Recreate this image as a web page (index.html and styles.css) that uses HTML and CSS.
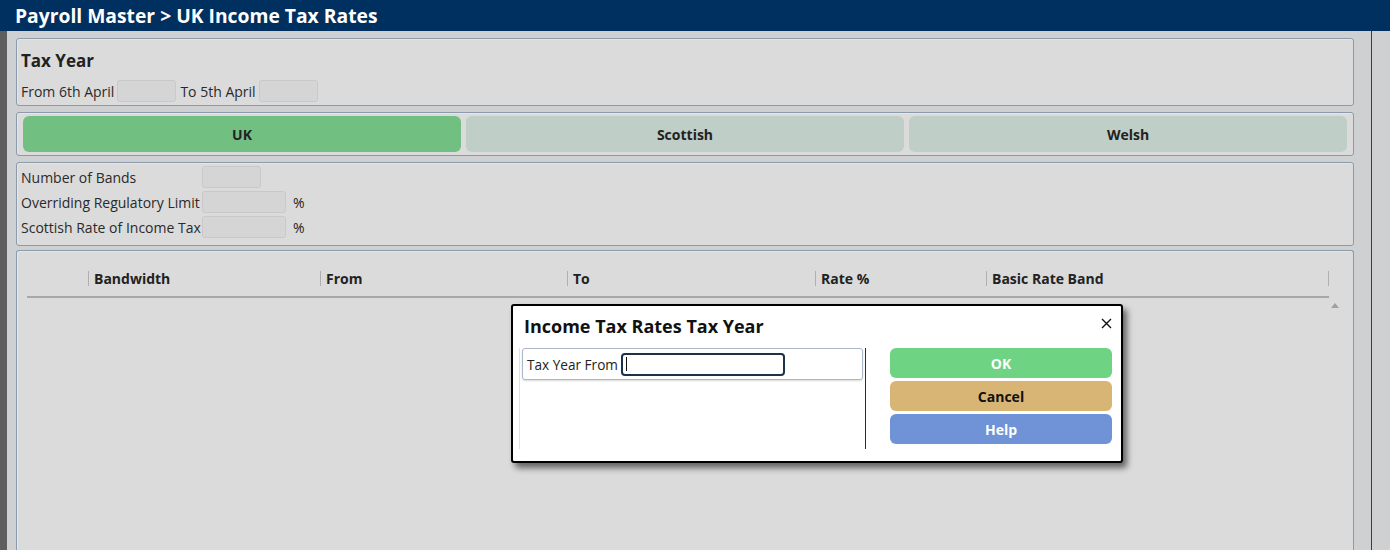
FILE: index.html
```html
<!DOCTYPE html>
<html>
<head>
<meta charset="utf-8">
<link rel="stylesheet" href="styles.css">
</head>
<body>
<header class="topbar">Payroll Master &gt; UK Income Tax Rates</header>
<div class="layout">
  <div class="rail"></div>
  <main class="content">
    <section class="panel year-panel">
      <h2 class="panel-title">Tax Year</h2>
      <div class="field-row">
        <span class="label">From 6th April</span>
        <span class="input w-short"></span>
        <span class="label">To 5th April</span>
        <span class="input w-short"></span>
      </div>
    </section>
    <section class="panel tabs-panel">
      <div class="tab tab-active">UK</div>
      <div class="tab">Scottish</div>
      <div class="tab">Welsh</div>
    </section>
    <section class="panel settings-panel">
      <div class="set-row"><span class="set-label">Number of Bands</span><span class="input w-short"></span></div>
      <div class="set-row"><span class="set-label">Overriding Regulatory Limit</span><span class="input w-mid"></span><span class="pct">%</span></div>
      <div class="set-row"><span class="set-label">Scottish Rate of Income Tax</span><span class="input w-mid"></span><span class="pct">%</span></div>
    </section>
    <section class="panel grid-panel">
      <div class="grid-head">
        <div class="col c0"></div>
        <div class="col c1">Bandwidth</div>
        <div class="col c2">From</div>
        <div class="col c3">To</div>
        <div class="col c4">Rate %</div>
        <div class="col c5">Basic Rate Band</div>
        <div class="col-end"></div>
      </div>
      <div class="grid-body">
        <div class="scroll-up"></div>
      </div>
    </section>
  </main>
  <div class="side-gap"></div>
  <div class="side-line"></div>
  <div class="side-rest"></div>
</div>

<div class="dialog">
  <div class="dlg-head">
    <span class="dlg-title">Income Tax Rates Tax Year</span>
    <svg class="dlg-close" width="11" height="11" viewBox="0 0 11 11"><path d="M1 1L10 10M10 1L1 10" stroke="#111" stroke-width="1.4" fill="none"/></svg>
  </div>
  <div class="dlg-body">
    <div class="dlg-left">
      <div class="dlg-field">
        <span class="dlg-label">Tax Year From</span>
        <span class="dlg-input"><span class="caret"></span></span>
      </div>
    </div>
    <div class="dlg-buttons">
      <div class="btn btn-ok">OK</div>
      <div class="btn btn-cancel">Cancel</div>
      <div class="btn btn-help">Help</div>
    </div>
  </div>
</div>
</body>
</html>
```
FILE: styles.css
```css
* { box-sizing: border-box; }
html, body { margin: 0; padding: 0; }
body {
  width: 1390px;
  height: 550px;
  overflow: hidden;
  font-family: "Open Sans", "Noto Sans", sans-serif;
  font-size: 14px;
  color: #222;
  background: #cfd0d2;
}
.topbar {
  height: 31px;
  background: #00305f;
  color: #fff;
  font-weight: 700;
  font-size: 19.3px;
  line-height: 31px;
  padding-left: 15px;
}
.layout {
  display: flex;
  height: 519px;
  overflow: hidden;
}
.rail { width: 7px; background: #5e5e5e; flex: none; }
.content {
  width: 1347px;
  flex: none;
  padding: 7px 0 0 9px;
  display: flex;
  flex-direction: column;
  overflow: hidden;
}
.side-gap { width: 17px; flex: none; }
.side-line { width: 1px; background: #2a3f5c; flex: none; }
.side-rest { flex: 1; }

.panel {
  flex: none;
  background: #dbdbdb;
  border: 1px solid #8b9bab;
  border-radius: 3px;
  box-shadow: inset 1px 1px 0 #e6e6e8;
}
.year-panel { height: 68px; padding: 8px 4px 0 4px; }
.panel-title {
  margin: 0;
  font-size: 17px;
  font-weight: 700;
  line-height: 28px;
  color: #222;
}
.field-row {
  display: flex;
  align-items: center;
  gap: 3px;
  margin-top: 5px;
  height: 22px;
}
.field-row .input + .label { margin-left: 1px; }
.label, .set-label { color: #2a2a2a; }
.input {
  display: inline-block;
  height: 22px;
  background: #d5d5d5;
  border: 1px solid #c9c9c9;
  border-radius: 3px;
}
.w-short { width: 59px; }
.w-mid { width: 84px; }

.tabs-panel {
  margin-top: 6px;
  height: 44px;
  padding: 3px 6px;
  display: flex;
  gap: 5px;
}
.tab {
  flex: 1;
  height: 36px;
  border-radius: 6px;
  background: #bfcec7;
  display: flex;
  align-items: center;
  justify-content: center;
  font-weight: 700;
  font-size: 14px;
  color: #222;
}
.tab-active { background: #72bf82; }

.settings-panel {
  margin-top: 6px;
  height: 84px;
  padding: 3px 4px;
  display: flex;
  flex-direction: column;
  gap: 3px;
}
.set-row { display: flex; align-items: center; height: 22px; }
.set-label { width: 181px; flex: none; padding-top: 1px; }
.pct { margin-left: 7px; padding-top: 1px; }

.grid-panel {
  margin-top: 4px;
  flex: 1 1 auto;
  min-height: 0;
  border-bottom: none;
  border-radius: 3px 3px 0 0;
  padding: 0 0 0 10px;
  position: relative;
  overflow: hidden;
}
.grid-head {
  display: flex;
  height: 47px;
  align-items: flex-end;
  width: 1302px;
  border-bottom: 2px solid #a8a8a8;
  padding-bottom: 10px;
}
.col {
  font-weight: 700;
  font-size: 14px;
  color: #222;
  height: 15px;
  line-height: 15px;
  padding-left: 5px;
  border-left: 1px solid #b0b0b0;
}
.c0 { width: 61px; border-left: none; }
.c1 { width: 232px; }
.c2 { width: 247px; }
.c3 { width: 248px; }
.c4 { width: 171px; }
.c5 { width: 342px; }
.col-end { width: 1px; height: 15px; background: #b0b0b0; }
.grid-body { position: relative; height: 260px; }
.scroll-up {
  position: absolute;
  left: 1304px;
  top: 5px;
  width: 0; height: 0;
  border-left: 4px solid transparent;
  border-right: 4px solid transparent;
  border-bottom: 5px solid #a0a0a0;
}

.dialog {
  position: absolute;
  left: 511px;
  top: 304px;
  width: 612px;
  height: 159px;
  background: #fff;
  border: 2px solid #000;
  border-radius: 3px;
  box-shadow: 4px 5px 6px rgba(0,0,0,0.55);
  padding: 0 9px 0 6px;
}
.dlg-head {
  display: flex;
  justify-content: space-between;
  align-items: center;
  height: 42px;
  padding: 0 0 2px 5px;
}
.dlg-title { font-size: 18px; font-weight: 700; color: #111; }
.dlg-close { margin-top: -5px; }
.dlg-body { display: flex; height: 101px; }
.dlg-left {
  width: 347px;
  border-left: 1px solid #e2e2e2;
  border-right: 1px solid #1f2f42;
  padding: 0 2px 0 2px;
}
.dlg-field {
  height: 32px;
  border: 1px solid #a9b7c6;
  border-radius: 3px;
  box-shadow: 0 1px 2px rgba(0,0,0,0.15);
  display: flex;
  align-items: center;
  padding-left: 4px;
  gap: 3px;
}
.dlg-label { color: #222; font-size: 13.6px; }
.dlg-input {
  width: 164px;
  height: 23px;
  border: 2px solid #1e3247;
  border-radius: 4px;
  display: flex;
  align-items: center;
  padding-left: 3px;
}
.caret { width: 1px; height: 14px; background: #111; }
.dlg-buttons {
  margin-left: 24px;
  width: 222px;
  display: flex;
  flex-direction: column;
  gap: 3px;
}
.btn {
  height: 30px;
  border-radius: 6px;
  display: flex;
  align-items: center;
  justify-content: center;
  font-weight: 700;
  font-size: 14px;
}
.btn-ok { background: #6fd384; color: #fff; }
.btn-cancel { background: #d8b574; color: #111; }
.btn-help { background: #7092d6; color: #fff; }
```
